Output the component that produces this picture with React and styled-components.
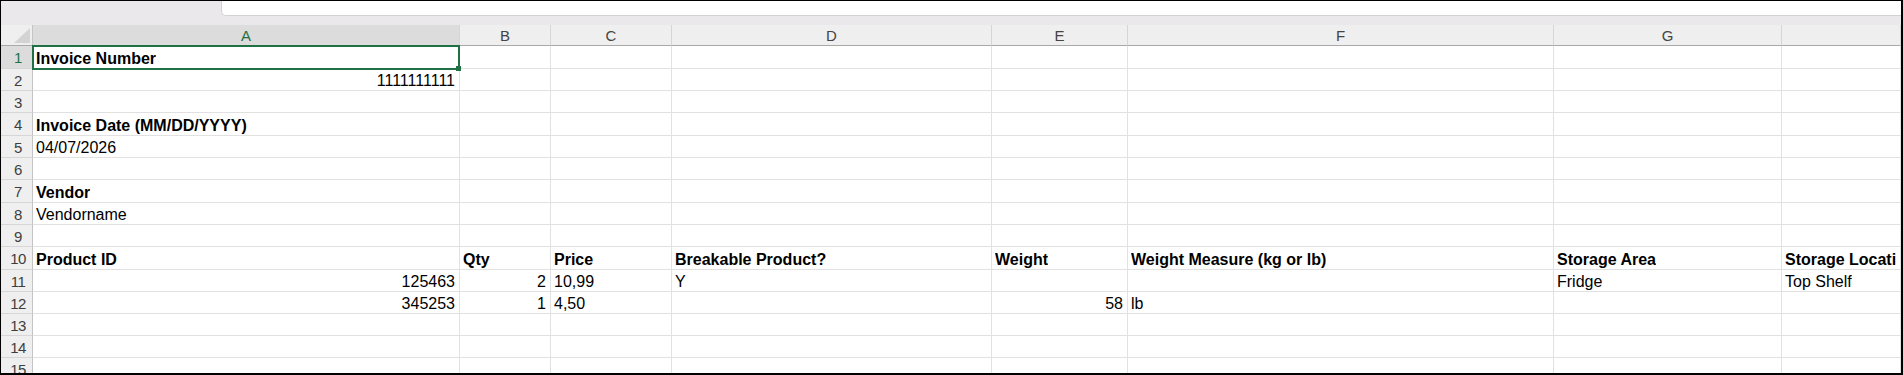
import React from "react";
import styled, { createGlobalStyle } from "styled-components";

const GlobalStyle = createGlobalStyle`
  html, body {
    margin: 0;
    padding: 0;
    background: #fff;
  }
  body {
    font-family: "Liberation Sans", Arial, sans-serif;
  }
`;

// H is only partly visible, its letter sits off screen
const columns = [
  { key: "A", width: "427px" },
  { key: "B", width: "91px" },
  { key: "C", width: "121px" },
  { key: "D", width: "320px" },
  { key: "E", width: "136px" },
  { key: "F", width: "426px" },
  { key: "G", width: "228px" },
  { key: "H", width: "1fr", hideLabel: true },
];

const rowHeights = [23, 22, 22, 23, 22, 22, 23, 22, 22, 23, 22, 22, 22, 22, 22];

const bold = (v) => ({ v, bold: true });
const num = (v) => ({ v, num: true });
const txt = (v) => ({ v });

const data = {
  1: { A: bold("Invoice Number") },
  2: { A: num("1111111111") },
  4: { A: bold("Invoice Date (MM/DD/YYYY)") },
  5: { A: txt("04/07/2026") },
  7: { A: bold("Vendor") },
  8: { A: txt("Vendorname") },
  10: {
    A: bold("Product ID"),
    B: bold("Qty"),
    C: bold("Price"),
    D: bold("Breakable Product?"),
    E: bold("Weight"),
    F: bold("Weight Measure (kg or lb)"),
    G: bold("Storage Area"),
    H: bold("Storage Location"),
  },
  11: {
    A: num("125463"),
    B: num("2"),
    C: txt("10,99"),
    D: txt("Y"),
    G: txt("Fridge"),
    H: txt("Top Shelf"),
  },
  12: {
    A: num("345253"),
    B: num("1"),
    C: txt("4,50"),
    E: num("58"),
    F: txt("lb"),
  },
};

const selected = { col: "A", row: 1 };

const Sheet = () => {
  return (
    <Frame>
      <GlobalStyle />
      <FormulaStrip>
        <FormulaInput />
      </FormulaStrip>
      <Grid
        $cols={["32px", ...columns.map((c) => c.width)].join(" ")}
        $rows={["21px", ...rowHeights.map((h) => `${h}px`)].join(" ")}
      >
        <Corner>
          <svg width="16" height="15" viewBox="0 0 16 15">
            <polygon points="16,0 16,15 0,15" fill="#d3d3d3" />
          </svg>
        </Corner>
        {columns.map((c) => (
          <ColHeader key={c.key} $active={c.key === selected.col}>
            {c.hideLabel ? "" : c.key}
          </ColHeader>
        ))}
        {rowHeights.map((_, i) => {
          const r = i + 1;
          const row = data[r] || {};
          return (
            <React.Fragment key={r}>
              <RowHeader $active={r === selected.row}>{r}</RowHeader>
              {columns.map((c) => {
                const cell = row[c.key];
                const isSel = r === selected.row && c.key === selected.col;
                return (
                  <Cell key={c.key} $bold={cell?.bold} $num={cell?.num}>
                    {cell && <span>{cell.v}</span>}
                    {isSel && (
                      <Selection>
                        <FillHandle />
                      </Selection>
                    )}
                  </Cell>
                );
              })}
            </React.Fragment>
          );
        })}
      </Grid>
    </Frame>
  );
};

const Frame = styled.div`
  width: 1903px;
  height: 375px;
  box-sizing: border-box;
  border-style: solid;
  border-color: #000;
  border-width: 1px 2px 2px 1px;
  overflow: hidden;
  display: flex;
  flex-direction: column;
  background: #fff;
`;

const FormulaStrip = styled.div`
  height: 24px;
  flex: none;
  background: #ebe8ec;
  display: flex;
  align-items: flex-start;
  padding-left: 220px;
`;

const FormulaInput = styled.div`
  flex: 1;
  height: 15px;
  box-sizing: border-box;
  background: #fff;
  border-left: 1px solid #d2d2d2;
  border-bottom: 1px solid #d2d2d2;
  border-bottom-left-radius: 5px;
`;

const Grid = styled.div`
  flex: 1;
  display: grid;
  grid-template-columns: ${(p) => p.$cols};
  grid-template-rows: ${(p) => p.$rows};
  overflow: hidden;
`;

const Corner = styled.div`
  box-sizing: border-box;
  background: #efefef;
  border-right: 1px solid #c4c4c4;
  border-bottom: 1px solid #a9a9a9;
  display: flex;
  align-items: flex-end;
  justify-content: flex-end;
  padding: 0 2px 2px 0;
`;

const ColHeader = styled.div`
  box-sizing: border-box;
  background: ${(p) => (p.$active ? "#dcdcdc" : "#efefef")};
  color: ${(p) => (p.$active ? "#1f7145" : "#444")};
  border-right: 1px solid #d6d6d6;
  border-bottom: 1px solid #a9a9a9;
  font-size: 15px;
  display: flex;
  align-items: center;
  justify-content: center;
  padding-top: 1px;
`;

const RowHeader = styled.div`
  box-sizing: border-box;
  background: ${(p) => (p.$active ? "#dcdcdc" : "#efefef")};
  color: ${(p) => (p.$active ? "#1f7145" : "#3e3e3e")};
  border-right: 1px solid #c4c4c4;
  border-bottom: 1px solid #d6d6d6;
  font-size: 15px;
  letter-spacing: -0.5px;
  display: flex;
  align-items: center;
  justify-content: center;
  padding: 1px 0 0 3px;
`;

const Cell = styled.div`
  position: relative;
  box-sizing: border-box;
  border-right: 1px solid #e1e1e1;
  border-bottom: 1px solid #e1e1e1;
  display: flex;
  align-items: flex-end;
  justify-content: ${(p) => (p.$num ? "flex-end" : "flex-start")};
  padding: 0 4px 0 3px;
  min-width: 0;
  font-size: 16px;
  line-height: 19px;
  font-weight: ${(p) => (p.$bold ? 700 : 400)};
  color: #000;
  white-space: nowrap;

  span {
    overflow: hidden;
  }
`;

const Selection = styled.div`
  position: absolute;
  top: -1px;
  left: -1px;
  right: -1px;
  bottom: -2px;
  border: 2px solid #1f7145;
  z-index: 2;
  pointer-events: none;
`;

const FillHandle = styled.div`
  position: absolute;
  right: -3px;
  bottom: -3px;
  width: 5px;
  height: 5px;
  background: #1f7145;
`;

export default function App() {
  return <Sheet />;
}
